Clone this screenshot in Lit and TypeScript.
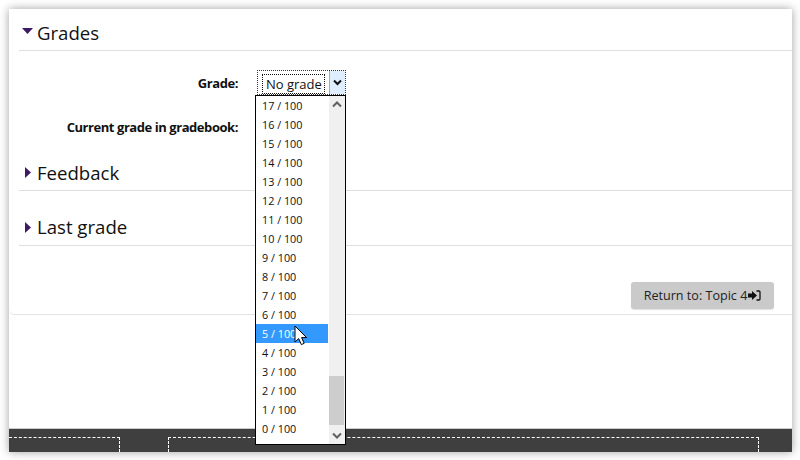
import { LitElement, html, css } from "lit";
import { customElement } from "lit/decorators.js";

@customElement("app-root")
export class AppRoot extends LitElement {
  static styles = css`
    :host { display: block; width: 800px; height: 460px; overflow: hidden; background: #fff; font-family: "Open Sans", sans-serif; color: #111; }
    * { box-sizing: border-box; }
    .stage { position: relative; width: 800px; height: 460px; padding: 9px 8px 8px 9px; background: #fff; }
    .window { width: 783px; height: 443px; display: flex; flex-direction: column; background: #fff; box-shadow: 0 0 9px rgba(0,0,0,.38); }
    .card { height: 306px; flex: none; padding: 0 0 0 10px; border-bottom: 1px solid #e3e3e3; border-bottom-left-radius: 5px; }
    .section { height: 42px; padding: 5px 0 0 4px; border-bottom: 1px solid #dfdfdf; display: flex; align-items: center; gap: 4px; font-size: 18.6px; line-height: 26px; color: #111; }
    .tri { width: 11px; flex: none; display: block; margin-top: -3px; }
    .tri.side { width: 10px; margin-top: 0; }
    .s1 { gap: 4px; padding: 6px 0 0 3px; }
    .row { display: flex; font-size: 13px; font-weight: 700; letter-spacing: -.44px; }
    .row label { width: 219px; text-align: right; }
    .r1 { padding-top: 23px; line-height: 18px; }
    .r2 { padding-top: 23px; line-height: 18px; }
    .sel { margin-left: 19px; width: 89px; height: 25px; margin-top: -4px; border: 1px dotted #333; display: flex; font-weight: 400; letter-spacing: 0; font-size: 13px; position: relative; }
    .val { width: 71px; padding: 3px 4px 1px 4px; }
    .val span { display: block; height: 20px; line-height: 18px; border: 1px dotted #111; padding-left: 3px; width: 63px; white-space: nowrap; }
    .btn-arrow { flex: none; width: 16px; background: #deeeff; border-left: 1px solid #7eb4ea; display: flex; align-items: center; justify-content: center; }
    .s2 { margin-top: 14px; height: 41px; }
    .s3 { margin-top: 13px; height: 42px; }
    .actions { display: flex; justify-content: flex-end; padding: 36px 18px 0 0; }
    .btn { width: 143px; height: 27px; background: #cacaca; border-radius: 3px; font-size: 12.6px; display: flex; align-items: center; justify-content: center; gap: 1px; color: #222; box-shadow: 0 1px 1px rgba(0,0,0,.12); }
    .spacer { flex: 1; }
    .footer { height: 24px; flex: none; background: #3f3f3f; border-top: 1px solid #ccc; padding-top: 8px; display: flex; }
    .f1 { width: 111px; border-top: 1px dashed #fff; border-right: 1px dashed #fff; }
    .f2 { margin-left: 48px; width: 591px; border-top: 1px dashed #fff; border-left: 1px dashed #fff; border-right: 1px dashed #fff; }
    .list { position: absolute; left: 255px; top: 95px; width: 91px; height: 350px; background: #fff; border: 1px solid #000; display: flex; }
    .items { width: 72px; margin-right: 1px; font-size: 10.8px; color: #111; }
    .item { height: 19px; line-height: 19px; padding-left: 6px; white-space: nowrap; }
    .item.on { background: #3399ff; color: #fff; }
    .bar { width: 16px; background: #f0f0f0; position: relative; display: flex; flex-direction: column; justify-content: space-between; padding: 5px 0; align-items: center; }
    .thumb { position: absolute; left: 0; top: 280px; width: 15px; height: 49px; background: #cdcdcd; }
    .cursor { position: absolute; left: 294px; top: 325px; }
  `;

  render() {
    const items = Array.from({ length: 18 }, (_, i) => 17 - i);
    return html`
      <div class="stage">
        <div class="window">
          <div class="card">
            <div class="section s1">
              <svg class="tri" width="11" height="6" viewBox="0 0 11 6"><path d="M0 0h11L5.500 6z" fill="#3d1a66"/></svg>
              <span>Grades</span>
            </div>
            <div class="row r1">
              <label>Grade:</label>
              <div class="sel">
                <div class="val"><span>No grade</span></div>
                <div class="btn-arrow">
                  <svg width="9" height="7" viewBox="0 0 9 7"><path d="M1 1.500l3.500 3.500L8 1.500" fill="none" stroke="#111" stroke-width="2"/></svg>
                </div>
              </div>
            </div>
            <div class="row r2"><label>Current grade in gradebook:</label></div>
            <div class="section s2">
              <svg class="tri side" width="10" height="11" viewBox="0 0 10 11"><path d="M2 0l6 5.500-6 5.500z" fill="#3d1a66"/></svg>
              <span>Feedback</span>
            </div>
            <div class="section s3">
              <svg class="tri side" width="10" height="11" viewBox="0 0 10 11"><path d="M2 0l6 5.500-6 5.500z" fill="#3d1a66"/></svg>
              <span>Last grade</span>
            </div>
            <div class="actions">
              <div class="btn">
                <span>Return to: Topic 4</span>
                <svg width="13" height="11" viewBox="0 0 13 11">
                  <path d="M0 3.500h4V1l5 4.500L4 10V7.500H0z" fill="#111"/>
                  <path d="M8.500 1h2.500a1 1 0 0 1 1 1v7a1 1 0 0 1-1 1H8.500" fill="none" stroke="#111" stroke-width="1.300"/>
                </svg>
              </div>
            </div>
          </div>
          <div class="spacer"></div>
          <div class="footer"><div class="f1"></div><div class="f2"></div></div>
        </div>
        <div class="list">
          <div class="items">
            ${items.map((n) => html`<div class="item ${n === 5 ? "on" : ""}">${n} / 100</div>`)}
          </div>
          <div class="bar">
            <svg width="10" height="7" viewBox="0 0 10 7"><path d="M1 5.500l4-4 4 4" fill="none" stroke="#606060" stroke-width="2"/></svg>
            <div class="thumb"></div>
            <svg width="10" height="7" viewBox="0 0 10 7"><path d="M1 1.500l4 4 4-4" fill="none" stroke="#606060" stroke-width="2"/></svg>
          </div>
        </div>
        <svg class="cursor" width="14" height="21" viewBox="0 0 14 21">
          <path d="M1 1v16l3.700-3.400 2.700 6 2.800-1.300-2.600-5.700h5z" fill="#fff" stroke="#000" stroke-width="1"/>
        </svg>
      </div>
    `;
  }
}
